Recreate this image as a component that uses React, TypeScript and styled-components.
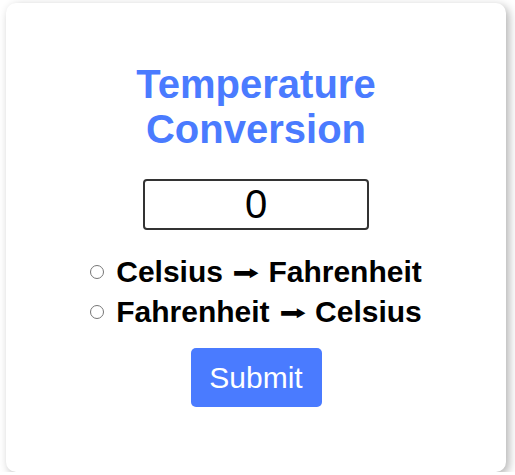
import { useState } from "react";
import styled, { createGlobalStyle } from "styled-components";

const GlobalStyle = createGlobalStyle`
  html, body {
    margin: 0;
    padding: 0;
    background: #ffffff;
    font-family: "Liberation Sans", Arial, sans-serif;
  }
`;

const Page = styled.div`
  padding: 3px 0 0 6px;
`;

const Card = styled.div`
  box-sizing: border-box;
  width: 500px;
  height: 469px;
  background: #ffffff;
  border-radius: 10px;
  box-shadow: 3px 3px 10px rgba(0, 0, 0, 0.3);
  display: flex;
  flex-direction: column;
  align-items: center;
  padding-top: 59px;
`;

const Title = styled.h1`
  margin: 0;
  width: 280px;
  text-align: center;
  color: #4a7bff;
  font-size: 40px;
  line-height: 45px;
  font-weight: 700;
`;

const NumberInput = styled.input`
  box-sizing: border-box;
  margin-top: 27px;
  width: 226px;
  height: 51px;
  padding: 0;
  border: 2px solid #333333;
  border-radius: 4px;
  text-align: center;
  font-family: "Liberation Sans", Arial, sans-serif;
  font-size: 40px;
  color: #000000;
  outline: none;
`;

const Options = styled.div`
  margin-top: 22px;
  display: flex;
  flex-direction: column;
  align-items: flex-start;
`;

const Option = styled.label`
  display: flex;
  align-items: center;
  gap: 12px;
  height: 40px;
  font-size: 30px;
  font-weight: 700;
  color: #000000;
  cursor: pointer;
`;

const Radio = styled.input`
  margin: 0;
  width: 14px;
  height: 14px;
`;

const Arrow = styled.span`
  display: inline-block;
  margin: 0 11px;
  transform: scale(1.15, 0.68);
  font-family: "DejaVu Sans", sans-serif;
  font-size: 28px;
`;

const SubmitButton = styled.button`
  margin-top: 16px;
  width: 131px;
  height: 59px;
  border: none;
  border-radius: 5px;
  background: #4a7bff;
  color: #ffffff;
  font-family: "Liberation Sans", Arial, sans-serif;
  font-size: 30px;
  cursor: pointer;
`;

const options = [
  { id: "c2f", from: "Celsius", to: "Fahrenheit" },
  { id: "f2c", from: "Fahrenheit", to: "Celsius" },
];

export default function App() {
  const [value, setValue] = useState("0");
  const [mode, setMode] = useState("");

  return (
    <Page>
      <GlobalStyle />
      <Card>
        <Title>Temperature Conversion</Title>
        <NumberInput
          type="text"
          value={value}
          onChange={(e) => setValue(e.target.value)}
        />
        <Options>
          {options.map((o) => (
            <Option key={o.id}>
              <Radio
                type="radio"
                name="mode"
                checked={mode === o.id}
                onChange={() => setMode(o.id)}
              />
              <span>
                {o.from}
                <Arrow>➡</Arrow>
                {o.to}
              </span>
            </Option>
          ))}
        </Options>
        <SubmitButton>Submit</SubmitButton>
      </Card>
    </Page>
  );
}
